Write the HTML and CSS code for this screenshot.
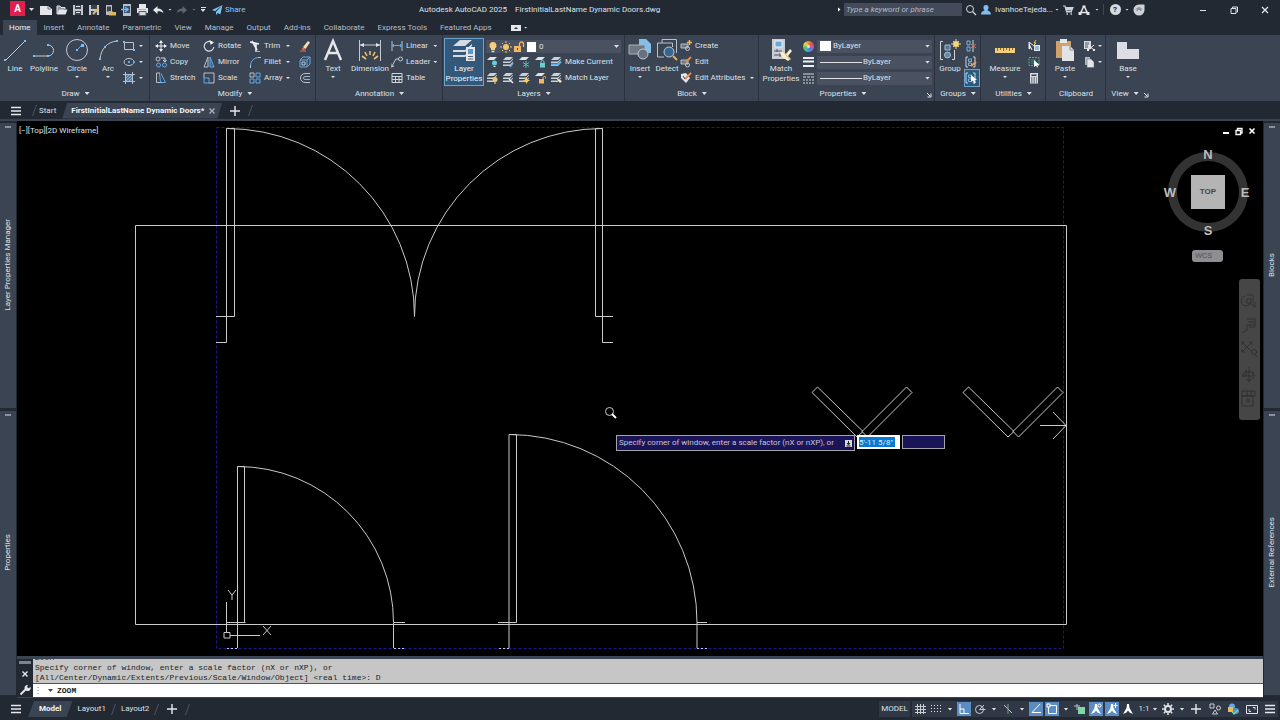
FILE: index.html
```html
<!DOCTYPE html>
<html lang="en">
<head>
<meta charset="utf-8">
<title>Autodesk AutoCAD 2025</title>
<link rel="stylesheet" href="styles.css">
</head>
<body>
<svg class="defs" aria-hidden="true">
  <symbol id="layers" viewBox="0 0 12 12"><path d="M4 1h7L8 4H1zM1 5.500h7l3-3v1L8 7H1zM1 8.500h7l3-3v1L8 10H1z" fill="#ccd1d8"/></symbol>
  <symbol id="page" viewBox="0 0 12 12"><path d="M0 2h8l4 3v6H0z" fill="#e4e6ea"/><path d="M8 2v3h3" stroke="#6d7580"/></symbol>
  <symbol id="menu" viewBox="0 0 12 12"><path d="M1 2.500h10M1 6h10M1 9.500h10" stroke="#e6e9ee" stroke-width="1.300"/></symbol>
  <symbol id="plus" viewBox="0 0 12 12"><path d="M6 1v10M1 6h10" stroke="#e6e9ee" stroke-width="1.400"/></symbol>
  <symbol id="cross" viewBox="0 0 12 12"><path d="M3 3l6 6M9 3l-6 6" stroke="#e6e9ee" stroke-width="1.200"/></symbol>
  <symbol id="person" viewBox="0 0 12 12"><path d="M6 1a2.500 2.500 0 0 1 2.500 2.700c0 1.200-.6 2.100-1.200 2.500C9.500 7 11 8 11 10.500H1C1 8 2.500 7 4.700 6.200 4 5.800 3.500 4.900 3.500 3.700A2.500 2.500 0 0 1 6 1z" fill="#82bdf0"/></symbol>
  <symbol id="figure" viewBox="0 0 12 12"><path d="M5 1h2l.5 4L11 11 7.500 9.500 6 7.500 4.500 9.500 1 11l3.500-6z" fill="#fff"/></symbol>
  <symbol id="bracket" viewBox="0 0 12 12"><path d="M3 1H1v10h2M8 1h2v10H8" stroke="#cfd4db"/><path d="M3.500 3h3v2.500h-3zM3.500 7h3v2.500h-3z" stroke="#77b3e3"/></symbol>
</svg>

<header class="titlebar">
  <div class="quick">
    <button class="logo" aria-label="Application menu">A</button>
    <button class="cell w13" aria-label="Menu options"><i class="dd"></i></button>
    <button class="cell" aria-label="New"><svg class="ico"><use href="#page"/></svg></button>
    <button class="cell" aria-label="Open"><svg class="ico"><path d="M1 10V2h3l1 1.500h4V5" stroke="#e4e6ea" fill="#8c939d"/><path d="M3 5.500h8.500L9.500 10.500H1z" fill="#e4e6ea"/></svg></button>
    <button class="cell" aria-label="Save"><svg class="ico"><path d="M1 1h10v10H1z" fill="#c3c8cf"/><path d="M3 1h6v4H3zM3 7h6v4H3z" fill="#38414e"/><path d="M4 2.500h4M4 8.500h4" stroke="#e4e6ea"/></svg></button>
    <button class="cell" aria-label="Save as"><svg class="ico"><path d="M1 1h10v10H1z" fill="#c3c8cf"/><path d="M3 1h6v4H3zM3 7h6v4H3z" fill="#38414e"/><path d="M5 10l5.500-5.500" stroke="#f0b84c" stroke-width="2"/></svg></button>
    <button class="cell" aria-label="Open from mobile"><svg class="ico"><path d="M2 1h6v10H2z" fill="#b9bec6"/><path d="M3 2.500h4v5H3z" fill="#3a424f"/><path d="M5 7h3l1 1h3v3.500H5z" fill="#e5b35c"/></svg></button>
    <button class="cell" aria-label="Save to mobile"><svg class="ico"><path d="M3 0h8v12H3z" fill="#b9bec6"/><path d="M4 2h6v7H4z" fill="#34506e"/><path d="M1 5.500h6M5 3l3 2.500L5 8" stroke="#70b7f2" stroke-width="1.500"/></svg></button>
    <button class="cell" aria-label="Plot"><svg class="ico"><path d="M3 0h7v4H3zM1 4h11v5H1z" fill="#e4e6ea"/><path d="M3 7.500h7v4H3z" fill="#d7dade" stroke="#525b68"/><path d="M2 5.500h8" stroke="#86bdea"/></svg></button>
    <button class="cell" aria-label="Undo"><svg class="ico"><path d="M1 6l4.500-4v2.500C9 4.500 11 6 11.500 9.500 10 7.500 8 7.200 5.500 7.300V10z" fill="#e4e6ea"/></svg></button>
    <button class="cell w8" aria-label="Undo list"><i class="dd sm"></i></button>
    <button class="cell" aria-label="Redo"><svg class="ico"><path d="M11 6L6.500 2v2.500C3 4.500 1 6 .5 9.500 2 7.500 4 7.200 6.500 7.300V10z" fill="#5b6471"/></svg></button>
    <button class="cell w8" aria-label="Redo list"><i class="dd sm dim"></i></button>
    <button class="cell w10 customize" aria-label="Customize toolbar"><i class="dd"></i></button>
    <button class="share"><svg class="ico"><path d="M11.500 1L1 6l3 1.200zM11.500 1L5 8v3l1.800-2 2.500 1.500z" fill="#7cc4f5"/></svg>Share</button>
  </div>
  <h1 class="title"><span>Autodesk AutoCAD 2025</span><span>FirstInitialLastName Dynamic Doors.dwg</span></h1>
  <div class="account">
    <button class="cell w10" aria-label="Collapse search"><i class="tri-right"></i></button>
    <input class="search" type="text" placeholder="Type a keyword or phrase" aria-label="Search">
    <button class="cell w18" aria-label="Search"><svg class="ico"><circle cx="5" cy="5" r="3.500" stroke="#d4d8de"/><path d="M7.500 7.500L11 11" stroke="#d4d8de" stroke-width="1.300"/></svg></button>
    <button class="user"><svg class="ico"><use href="#person"/></svg>IvanhoeTejeda...</button>
    <button class="cell w8" aria-label="Account options"><i class="dd sm"></i></button>
    <button class="cell w14" aria-label="App Store"><svg class="ico"><path d="M1 2h2l1.500 6H10M3.500 3.500H11L9.500 7H4" stroke="#cdd2d8" stroke-width="1.200"/><path d="M4 5h6" stroke="#cdd2d8" stroke-width="2"/><path d="M4.500 10h1.500M8.500 10h1.500" stroke="#cdd2d8" stroke-width="1.500"/></svg></button>
    <button class="cell w18" aria-label="Autodesk"><svg class="ico"><path d="M6 2l4 8M6 2L2 10M2 8.500h8" stroke="#e4e6ea" stroke-width="1.500"/><path d="M4.500 1.500h3v2h-3zM.5 8h3v3h-3zM8.500 8h3v3h-3z" fill="#e4e6ea"/></svg></button>
    <button class="cell w8" aria-label="Autodesk options"><i class="dd sm"></i></button>
    <span class="vsep"></span>
    <button class="cell" aria-label="Help"><span class="help">?</span></button>
    <button class="cell w8" aria-label="Help options"><i class="dd sm"></i></button>
    <button class="cell" aria-label="Assistant"><svg class="ico"><path d="M6 .5h5.500V6A5.500 5.500 0 1 1 6 .5z" fill="#cfd3d9"/><path d="M4 7a2 2 0 0 1 4 0M3 5.500a3.500 3.500 0 0 1 6 0" stroke="#6f7782"/></svg></button>
    <div class="winbtns">
      <button aria-label="Minimize"><svg class="ico"><path d="M3 6.500h6" stroke="#dfe2e7"/></svg></button>
      <button aria-label="Restore"><svg class="ico"><path d="M3 4.500h5v5H3zM4.500 4V3h5v5H8.500" stroke="#dfe2e7"/></svg></button>
      <button aria-label="Close"><svg class="ico"><use href="#cross"/></svg></button>
    </div>
  </div>
</header>

<nav class="tabs">
  <button class="on">Home</button><button>Insert</button><button>Annotate</button><button>Parametric</button><button>View</button><button>Manage</button><button>Output</button><button>Add-ins</button><button>Collaborate</button><button>Express Tools</button><button>Featured Apps</button>
  <button class="mini" aria-label="Minimize ribbon"><svg width="10" height="6"><path d="M0 0h10v6H0z" fill="#e4e6ea"/><path d="M3 4l2-2 2 2z" fill="#222933"/></svg><i class="dd sm"></i></button>
</nav>

<section class="ribbon">
  <div class="panel draw">
    <div class="body">
      <button class="big"><svg class="pic"><path d="M3 22L22 3" stroke="#c3c9d2"/><path d="M1 21h2v2H1zM21 2h2v2h-2z" fill="#7dbdf2"/></svg>Line</button>
      <button class="big"><svg class="pic"><path d="M2 18h14a5 5 0 0 0 0-11" stroke="#c3c9d2"/><path d="M1 17h2v2H1zM15 17h2v2h-2zM15 6h2v2h-2z" fill="#7dbdf2"/></svg>Polyline</button>
      <button class="big"><svg class="pic"><circle cx="12" cy="12" r="10.500" stroke="#c3c9d2"/><path d="M12 12l5-5" stroke="#5fa9ea"/><path d="M11 11h2v2h-2zM16 6h3v3h-3z" fill="#7dbdf2"/></svg>Circle<i class="dd sm"></i></button>
      <button class="big"><svg class="pic"><path d="M4 21C5 11 11 4 21 3" stroke="#c3c9d2"/><path d="M3 20h2v2H3zM8 8h2v2H8zM20 2h2v2h-2z" fill="#7dbdf2"/></svg>Arc<i class="dd sm"></i></button>
      <div class="rows">
        <button aria-label="Rectangle"><svg class="ico"><path d="M1.500 2.500h9v7h-9z" stroke="#b9c0ca"/><path d="M0 1h2v2H0zM10 9h2v2h-2z" fill="#7dbdf2"/></svg><i class="dd sm"></i></button>
        <button aria-label="Ellipse"><svg class="ico"><ellipse cx="6" cy="6" rx="5" ry="3.500" stroke="#b9c0ca"/><path d="M5 5h2v2H5zM10 5h2v2h-2z" fill="#5fa9ea"/></svg><i class="dd sm"></i></button>
        <button aria-label="Hatch"><svg class="ico"><path d="M3 3h6v6H3z" fill="#52789c"/><path d="M2.500 0v12M9.500 0v12M0 2.500h12M0 9.500h12" stroke="#b9c0ca"/><path d="M3 6l3-3M3 9l6-6M6 9l3-3" stroke="#7db4e0"/></svg><i class="dd sm"></i></button>
      </div>
    </div>
    <button class="name">Draw <i class="dd"></i></button>
  </div>

  <div class="panel modify">
    <div class="body">
      <div class="rows">
        <button><svg class="ico"><path d="M6 1v10M1 6h10" stroke="#eef0f3"/><path d="M6 0l2 3H4zM6 12l2-3H4zM0 6l3-2v4zM12 6L9 4v4z" fill="#eef0f3"/></svg>Move</button>
        <button><svg class="ico"><circle cx="3" cy="3" r="2" stroke="#b9c0ca"/><circle cx="3.500" cy="9" r="2" stroke="#5fa9ea"/><circle cx="9.500" cy="9" r="2" stroke="#5fa9ea"/><path d="M6 2h4v3M8 4l2 2 1.500-2" stroke="#d7dbe1"/></svg>Copy</button>
        <button><svg class="ico"><path d="M5 1H1.500v9.500H7" stroke="#b9c0ca"/><path d="M4.500 1l1 9.500M6 1.500l4.500 9H7" stroke="#5fa9ea"/></svg>Stretch</button>
      </div>
      <div class="rows">
        <button><svg class="ico"><path d="M9 2.500A4.800 4.800 0 1 0 10.800 7" stroke="#d7dbe1" stroke-width="1.200"/><path d="M6.500 0L11 2.500 7.500 5z" fill="#eef0f3"/></svg>Rotate</button>
        <button><svg class="ico"><path d="M5 1v10H1z" stroke="#b9c0ca"/><path d="M7 1v10h4z" stroke="#5fa9ea" fill="#37658f"/></svg>Mirror</button>
        <button><svg class="ico"><path d="M1 6V1h10v10H6" stroke="#b9c0ca"/><path d="M1 6h5v5H1z" stroke="#5fa9ea"/></svg>Scale</button>
      </div>
      <div class="rows">
        <button><svg class="ico"><path d="M1 2l9 2M3 1l5 9M7 4v7" stroke="#eef0f3" stroke-width="1.600"/><path d="M6 11.500h5" stroke="#8bbce5"/></svg>Trim<i class="dd sm"></i></button>
        <button><svg class="ico"><path d="M9 1.500h3M1.500 12V9" stroke="#b9c0ca"/><path d="M1.500 9A8 8 0 0 1 9 1.500" stroke="#5fa9ea"/></svg>Fillet<i class="dd sm"></i></button>
        <button><svg class="ico"><path d="M1 1h4v4H1z" stroke="#b9c0ca"/><path d="M7 1h4v4H7zM1 7h4v4H1zM7 7h4v4H7z" stroke="#5fa9ea"/></svg>Array<i class="dd sm"></i></button>
      </div>
      <div class="rows">
        <button aria-label="Erase"><svg class="ico"><path d="M4 7l5-6 2 1.500L6.500 9z" fill="#f3dfa9"/><path d="M4 7l2.500 2L5 10.500 2.500 9z" fill="#e0705a"/><path d="M1 11h6" stroke="#e0705a"/></svg></button>
        <button aria-label="Explode"><svg class="ico"><path d="M1 4h7v7H1zM1 4l3-3h7v7l-3 3M8 4l3-3" stroke="#5fa9ea"/><path d="M3 6h3v3H3z" stroke="#c3c9d2"/></svg></button>
        <button aria-label="Offset"><svg class="ico"><path d="M11 1.500H6a4.500 4.500 0 0 0 0 9h5" stroke="#b9c0ca"/><path d="M11 4.500H6a1.500 1.500 0 0 0 0 3h5" stroke="#9fb0c6"/></svg></button>
      </div>
    </div>
    <button class="name">Modify <i class="dd"></i></button>
  </div>

  <div class="panel annot">
    <div class="body">
      <button class="big"><svg class="pic"><path d="M4 22L12 3l8 19M7 15h10" stroke="#e4e6ea" stroke-width="2.500"/></svg>Text<i class="dd sm"></i></button>
      <button class="big"><svg class="pic"><path d="M1.500 2v21M22.500 2v21M2 7h20" stroke="#c3c9d2"/><path d="M2 7l4-2v4zM22 7l-4-2v4z" fill="#e4e6ea"/><path d="M12 13v4M7 14l2 4M17 14l-2 4M4 18l4 3M20 18l-4 3" stroke="#f2bd63" stroke-width="1.600"/></svg>Dimension</button>
      <div class="rows">
        <button><svg class="ico"><path d="M1 1v10M11 1v10" stroke="#b9c0ca"/><path d="M1 5.500h10M3 4L1 5.500 3 7M9 4l2 1.500L9 7" stroke="#5fa9ea"/></svg>Linear<i class="dd sm"></i></button>
        <button><svg class="ico"><path d="M1 10l4-7h3M0 7.500v3.500l3-1" stroke="#c3c9d2"/><circle cx="9.500" cy="3" r="2" stroke="#c3c9d2"/></svg>Leader<i class="dd sm"></i></button>
        <button><svg class="ico"><path d="M1 1.500h10v9H1zM1 4.500h10M1 7.500h10M4.500 4v6.500M8 4v6.500" stroke="#d0d5dc"/></svg>Table</button>
      </div>
    </div>
    <button class="name">Annotation <i class="dd"></i></button>
  </div>

  <div class="panel layer">
    <div class="body">
      <button class="big pressed"><svg class="pic"><path d="M8 2h12l-7 6H1zM1 14h12l7-6v-2l-7 6H1zM1 19h12l7-6v-2l-7 6H1z" fill="#d7dbe1"/><path d="M14 9h9v14h-9z" fill="#e4e6ea"/><path d="M16 11h5v5h-5z" fill="#559bd0"/><path d="M16 18.500h5M16 21h5" stroke="#56606d"/></svg>Layer<br>Properties</button>
      <div class="layergrid">
        <div class="combo">
          <svg class="ico"><path d="M6 1a3.500 3.500 0 0 1 2 6.400V9H4V7.400A3.500 3.500 0 0 1 6 1z" fill="#f7cf78"/><path d="M4.500 10.500h3" stroke="#d7dbe1" stroke-width="1.500"/></svg>
          <svg class="ico"><circle cx="6" cy="6" r="3" fill="#f2c868"/><path d="M6 0v2M6 10v2M0 6h2M10 6h2M2 2l1 1M9 9l1 1M10 2L9 3M3 9l-1 1" stroke="#f2c868"/></svg>
          <svg class="ico"><path d="M1 5h7v6H1z" fill="#f0b765"/><path d="M6.500 5V3a2 2 0 0 1 4 0v3" stroke="#f0b765" stroke-width="1.300"/><path d="M4 7h1v2H4z" fill="#3b4453"/></svg>
          <span class="swatch"></span>
          <select aria-label="Layer"><option>0</option></select><i class="dd"></i>
        </div>
        <div class="line">
          <button aria-label="Layer off"><svg class="ico"><path d="M4 1h7L8 4H1z" fill="#dfe3e8"/><circle cx="8.500" cy="7" r="2.500" fill="#5fd0d8"/><path d="M7.500 10.500h2" stroke="#e4e6ea"/></svg></button>
          <button aria-label="Isolate layer"><svg class="ico"><use href="#layers"/><path d="M8 11l3-4" stroke="#7db4e0" stroke-width="1.500"/></svg></button>
          <button aria-label="Freeze layer"><svg class="ico"><path d="M4 1h7L8 4H1z" fill="#dfe3e8"/><path d="M8 5v7M5 6.500l6 4M11 6.500l-6 4" stroke="#55c2b0"/></svg></button>
          <button aria-label="Lock layer"><svg class="ico"><path d="M4 1h7L8 4H1z" fill="#dfe3e8"/><path d="M6 7h5v4.500H6z" fill="#6ad0cf"/><path d="M7 7V6a1.500 1.500 0 0 1 3 0v1" stroke="#6ad0cf"/></svg></button>
          <button class="grow"><svg class="ico"><use href="#layers"/><path d="M1 8.500h7l3-3" stroke="#5cb2e8" stroke-width="1.800"/></svg>Make Current</button>
        </div>
        <div class="line">
          <button aria-label="All layers on"><svg class="ico"><use href="#layers"/><circle cx="9" cy="7.500" r="2.500" fill="#f2c868"/><path d="M8 11h2" stroke="#e4e6ea"/></svg></button>
          <button aria-label="Unisolate layer"><svg class="ico"><use href="#layers"/><path d="M7 7l4 4" stroke="#eef0f3" stroke-width="1.500"/></svg></button>
          <button aria-label="Thaw layers"><svg class="ico"><use href="#layers"/><circle cx="8.500" cy="8.500" r="2" fill="#f2c868"/><path d="M8.500 5.500v6M5.500 8.500h6" stroke="#f2c868"/></svg></button>
          <button aria-label="Unlock layer"><svg class="ico"><path d="M4 1h7L8 4H1z" fill="#dfe3e8"/><path d="M5 7h5v4.500H5z" fill="#f0b765"/><path d="M9 7V6a1.500 1.500 0 0 1 3 0v1" stroke="#f0b765"/></svg></button>
          <button class="grow"><svg class="ico"><use href="#layers"/><path d="M6 6l4 5 2-2z" fill="#f7edcf"/></svg>Match Layer</button>
        </div>
      </div>
    </div>
    <button class="name">Layers <i class="dd"></i></button>
  </div>

  <div class="panel block">
    <div class="body">
      <button class="big"><svg class="pic"><path d="M11 1h7l5 5v9H11z" fill="#83bfe9"/><path d="M1 7h16v9H1z" fill="#6e7784" stroke="#aab1bb"/><circle cx="15" cy="16" r="5" fill="#68717e" stroke="#c3c9d2"/></svg>Insert<i class="dd sm"></i></button>
      <button class="big"><svg class="pic"><path d="M7 5V1.500h14.500V15M2.500 5h15v4M2.500 5v14H9" stroke="#b9c0ca"/><circle cx="14" cy="14" r="5" fill="#37658f" stroke="#c3c9d2"/><path d="M18 18l4 4" stroke="#dbb36b" stroke-width="2"/></svg>Detect</button>
      <div class="rows">
        <button><svg class="ico"><path d="M1 4h7v4H1z" fill="#6e7784" stroke="#b9c0ca"/><circle cx="7.500" cy="8.500" r="2" stroke="#c3c9d2"/><path d="M9.500 0v5M7 2.500h5" stroke="#f0b765" stroke-width="1.500"/></svg>Create</button>
        <button><svg class="ico"><path d="M1 4h7v4H1z" fill="#6e7784" stroke="#b9c0ca"/><circle cx="7.500" cy="9" r="2" stroke="#c3c9d2"/><path d="M6 6l5-5" stroke="#e58b54" stroke-width="1.800"/></svg>Edit</button>
        <button><svg class="ico"><path d="M1 2l5-1 4 5-4 5-5-5z" fill="#e4e6ea"/><path d="M5 7l6-6" stroke="#e58b54" stroke-width="1.800"/><path d="M3 4l2 3" stroke="#3b4453"/></svg>Edit Attributes<i class="dd sm"></i></button>
      </div>
    </div>
    <button class="name">Block <i class="dd"></i></button>
  </div>

  <div class="panel props">
    <div class="body">
      <button class="big"><svg class="pic"><path d="M3 1h13v20H3z" fill="#c9ced5"/><path d="M6 3h7v6H6z" fill="#62a9dc" stroke="#eef0f3"/><path d="M5 13h8M5 17h8M8 11v3M11 15v4" stroke="#4d5764"/><path d="M11 15l3-2 3 3 4-5 2 2-4 5 3 3-3 2-6-4z" fill="#f7edcf"/><path d="M14 13l7 9" stroke="#e5b35c"/></svg>Match<br>Properties</button>
      <div class="proplist">
        <div class="line"><span class="wheel"></span><div class="combo"><span class="swatch"></span><select aria-label="Color"><option>ByLayer</option></select><i class="dd"></i></div></div>
        <div class="line"><svg class="ico"><path d="M0 2h11M0 5.500h11M0 10h11" stroke="#eef0f3" stroke-width="2"/></svg><div class="combo"><span class="rule"></span><select aria-label="Lineweight"><option>ByLayer</option></select><i class="dd"></i></div></div>
        <div class="line"><svg class="ico"><path d="M0 2h11" stroke="#d0d5dc"/><path d="M0 5h11" stroke="#d0d5dc" stroke-dasharray="3 1"/><path d="M0 8h11M0 11h11" stroke="#d0d5dc" stroke-dasharray="2 1"/></svg><div class="combo"><span class="rule"></span><select aria-label="Linetype"><option>ByLayer</option></select><i class="dd"></i></div></div>
      </div>
    </div>
    <div class="foot"><button class="name">Properties <i class="dd"></i></button><button class="launch" aria-label="Properties palette"><svg width="6" height="6"><path d="M1 1l3 3M5 1.500V5H1.500" stroke="#e4e6ea"/></svg></button></div>
  </div>

  <div class="panel groups">
    <div class="body">
      <button class="big"><svg class="pic"><path d="M5 3.500H2.500v18H5M14 21.500h2.500V12" stroke="#d0d5dc"/><path d="M7 7h5v5H7z" fill="#5a7088" stroke="#9cc3e2"/><circle cx="9.500" cy="17" r="3" fill="#6c8699" stroke="#9cc3e2"/><circle cx="18" cy="6" r="3" fill="#f5d27c"/><path d="M18 1v10M13 6h10M15 3l6 6M21 3l-6 6" stroke="#f5d27c"/></svg>Group</button>
      <div class="rows">
        <button aria-label="Ungroup"><svg class="ico"><path d="M2 1h3v4H2zM2 7h3v4H2z" stroke="#77b3e3"/><path d="M8 0v12" stroke="#cfd4db"/><path d="M6 4l5 4M11 4L6 8" stroke="#e0705a"/></svg></button>
        <button aria-label="Group edit"><svg class="ico"><use href="#bracket"/><path d="M6 10l5-4" stroke="#e8a05c" stroke-width="2"/></svg></button>
        <button class="tog" aria-label="Group selection"><svg class="ico"><use href="#bracket"/><path d="M6 3v7l2-1.500 1 3 1.500-.5-1-3H12z" fill="#fff"/></svg></button>
      </div>
    </div>
    <button class="name">Groups <i class="dd"></i></button>
  </div>

  <div class="panel utils">
    <div class="body">
      <button class="big"><svg class="pic"><path d="M2 10h20v5H2z" fill="#f3cf7e"/><path d="M4.500 10v3M7.500 10v2M10.500 10v3M13.500 10v2M16.500 10v3M19.500 10v2" stroke="#8b6a2c"/></svg>Measure<i class="dd sm"></i></button>
      <div class="rows">
        <button aria-label="Quick select"><svg class="ico"><path d="M1 2v7l2-1.500 1 2.500M1 2l5 4" fill="#fff" stroke="#e4e6ea"/><path d="M6 5h6v6H6z" fill="#e4e6ea"/><path d="M7 7h4M7 9h4" stroke="#4c90c8"/><path d="M8 0L6 3h2L6 5" stroke="#f2c868"/></svg></button>
        <button aria-label="Select all"><svg class="ico"><path d="M1 1.500h10v8H1z" stroke="#52b585" stroke-dasharray="2 1"/><path d="M3 3h5v5H3z" fill="#24745a"/><path d="M6 4v7l2-1.500 1 2 1-.5-1-2h2.500z" fill="#fff"/></svg></button>
        <button aria-label="Calculator"><svg class="ico"><path d="M2 1h8v10.500H2z" fill="#d7dbe1"/><path d="M3.500 2.500h5v1.500h-5z" fill="#3b4453"/><path d="M3 6h6M3 8h6M3 10h6" stroke="#3b4453" stroke-dasharray="1.500 1"/></svg></button>
      </div>
    </div>
    <button class="name">Utilities <i class="dd"></i></button>
  </div>

  <div class="panel clip">
    <div class="body">
      <button class="big"><svg class="pic"><path d="M3 3h15v17H3z" fill="#cfa36a"/><path d="M7 1h7v4H7z" fill="#e4e6ea"/><path d="M9 8h8l4 4v11H9z" fill="#e1e3e7"/><path d="M17 8v4h4" stroke="#89909b"/></svg>Paste<i class="dd sm"></i></button>
      <div class="rows">
        <button aria-label="Cut"><svg class="ico"><path d="M1 1h7v8H1z" fill="#d7dbe1"/><path d="M2 3h4M2 5h4M2 7h3" stroke="#4d5764"/><path d="M5 5l6 5M11 5l-6 5" stroke="#eef0f3"/><path d="M10 9h2v2h-2zM4 9h2v2H4z" fill="#eef0f3"/></svg><i class="dd sm"></i></button>
        <button aria-label="Copy to clipboard"><svg class="ico"><path d="M2 1h5v8H2z" fill="#b4bac3"/><path d="M4 3h4l3 3v5.500H4z" fill="#e4e6ea" stroke="#59626f" stroke-width=".5"/></svg><i class="dd sm"></i></button>
      </div>
    </div>
    <button class="name">Clipboard</button>
  </div>

  <div class="panel view">
    <div class="body">
      <button class="big"><svg class="pic"><path d="M1 4h10v7h12v10H1z" fill="#dcdee3"/></svg>Base<i class="dd sm"></i></button>
    </div>
    <div class="foot"><button class="name">View <i class="dd"></i></button><button class="launch" aria-label="View dialog"><svg width="6" height="6"><path d="M1 1l3 3M5 1.500V5H1.500" stroke="#e4e6ea"/></svg></button></div>
  </div>
</section>

<nav class="files">
  <button class="cell w32" aria-label="File menu"><svg class="ico"><use href="#menu"/></svg></button>
  <span class="slash"></span>
  <button class="start">Start</button>
  <div class="filetab"><button class="fname">FirstInitialLastName Dynamic Doors*</button><button class="close" aria-label="Close tab"><svg class="ico"><path d="M3.500 3.500l5 5M8.500 3.500l-5 5" stroke="#aab1bb" stroke-width="1.300"/></svg></button></div>
  <button class="cell w26" aria-label="New tab"><svg class="ico"><use href="#plus"/></svg></button>
  <span class="slash"></span>
</nav>

<main class="work">
  <aside class="side left">
    <button class="palette"><span>Layer Properties Manager</span></button>
    <button class="palette"><span>Properties</span></button>
  </aside>
  <div class="center">
    <div class="canvas">
      <svg class="drawing" aria-label="Door drawing">
        <g transform="translate(-17 -121)" stroke="#c9c9c9">
          <path d="M216.500 127.500H1063.500V648.500H216.500z" stroke="#1a1a90" stroke-dasharray="3 2"/>
          <path d="M136 225.500H1066.500V624.500H135.500V225.500z"/>
          <path d="M216 316.500H234.500V128.500H226.500V342.500H216M234.500 128.500"/>
          <path d="M226.500 128.500A188 188 0 0 1 414.500 316.500A188 188 0 0 1 602.500 128.500"/>
          <path d="M613 316.500H595.500V128.500H602.500V342.500H613"/>
          <path d="M226.500 622.500H245.500M237.500 648V466.500H244.500V622.500M237.500 466.500A156 156 0 0 1 393.500 622.500V648M394 622.500H405"/>
          <path d="M227 648.500H237M394 648.500H405M499 648.500H509M697 648.500H707" stroke-dasharray="2 2"/>
          <path d="M498 622.500H516.500V434.500H509V648M509 434.500A188 188 0 0 1 697 622.500V648M697 622.500H707"/>
          <path id="bifold" d="M968.500 387L963 392.500 1008 437 1014 431.500zM1057.500 387L1063 392.500 1018.500 437 1013 431.500z"/>
          <use href="#bifold" x="-151"/>
          <path d="M1040 425.500H1066M1053 412L1066 425.500 1053 439"/>
          <circle cx="609.500" cy="411.500" r="4"/><path d="M612 414l4 4" stroke="#fff" stroke-width="2"/>
          <path d="M226.500 602V632M224 632.500H230V638H224zM230 635.500H260"/>
          <path d="M228 590L232 595 236 590M232 595V600M263 626L271 635M271 626L263 635"/>
        </g>
      </svg>
      <button class="viewlabel">[−][Top][2D Wireframe]</button>
      <div class="docbtns">
        <button aria-label="Minimize drawing"><svg class="ico"><path d="M3 8h6" stroke="#fff" stroke-width="2"/></svg></button>
        <button aria-label="Restore drawing"><svg class="ico"><path d="M3 5.500h4.500v4H3zM4.500 5V3.500H9V8H8" stroke="#fff" stroke-width="1.300"/></svg></button>
        <button aria-label="Close drawing"><svg class="ico"><path d="M3.500 3.500l5 5M8.500 3.500l-5 5" stroke="#fff" stroke-width="1.600"/></svg></button>
      </div>
      <div class="cube">
        <span class="n">N</span><span class="w">W</span><button>TOP</button><span class="e">E</span><span class="s">S</span>
      </div>
      <button class="wcs">WCS</button>
      <div class="navbar">
        <button aria-label="Full navigation wheel"><svg class="tool"><path d="M6 5a5 5 0 1 0 5 8M8 4h6v8M8 8h4v4H8zM11 12l5 4v-5"/></svg></button>
        <button aria-label="Pan"><svg class="tool"><path d="M3 18l5-3V9M8 4h8v8H10M9 7h6M9 10h6"/></svg></button>
        <button aria-label="Zoom extents"><svg class="tool"><path d="M3 3l10 10M13 3L3 13M3 6V3h3M10 3h3v3M3 10v3h3"/><circle cx="15" cy="13" r="2.500"/><path d="M16 15l2 3"/></svg></button>
        <button aria-label="Orbit"><svg class="tool"><path d="M10 3v14M3 12l4-6v6zM7 8h7v4H3M13 8l3 4-3 3M8 15l2 3 2-3"/></svg></button>
        <button aria-label="ShowMotion"><svg class="tool"><path d="M3 3h13v5H3zM8 3v5M12 3v5M3 8h11v10H3z"/><path d="M8 11h2v3H8z"/></svg></button>
      </div>
      <div class="prompt">
        <label for="dist">Specify corner of window, enter a scale factor (nX or nXP), or <svg width="7" height="7"><path d="M0 0h7v7H0z" fill="#d8d8dc"/><path d="M3.500 1v3M2 3l1.500 2L5 3M1.500 6h4" stroke="#222"/></svg></label>
        <input id="dist" class="dist" type="text" value="5'-11 5/8&quot;">
        <input class="angle" type="text" aria-label="Second value">
      </div>
    </div>
    <section class="command">
      <div class="cmdtools">
        <i class="grip"></i>
        <button aria-label="Close command line"><svg class="ico"><path d="M3.500 3.500l5 5M8.500 3.500l-5 5" stroke="#e4e6ea" stroke-width="1.400"/></svg></button>
        <button aria-label="Customize"><svg class="ico"><path d="M1.500 10.500L7 5" stroke="#e4e6ea" stroke-width="2"/><path d="M6 5.500A3 3 0 0 1 9 1L8 3l1.500 1.300L11.500 3A3 3 0 0 1 7 6.500z" fill="#e4e6ea"/></svg></button>
      </div>
      <div class="cmdmain">
        <div class="history"><div>ZOOM</div><div>Specify corner of window, enter a scale factor (nX or nXP), or</div><div>[All/Center/Dynamic/Extents/Previous/Scale/Window/Object] &lt;real time&gt;: D</div></div>
        <div class="entry"><i class="dots"></i><i class="dd"></i><input type="text" value="ZOOM" aria-label="Command"></div>
      </div>
    </section>
  </div>
  <aside class="side right">
    <button class="palette"><span>Blocks</span></button>
    <button class="palette"><span>External References</span></button>
  </aside>
</main>

<footer class="status">
  <button class="cell w32" aria-label="Layout menu"><svg class="ico"><use href="#menu"/></svg></button>
  <button class="modeltab">Model</button>
  <button class="lay">Layout1</button><span class="slash"></span>
  <button class="lay">Layout2</button><span class="slash"></span>
  <button class="cell w26" aria-label="New layout"><svg class="ico"><use href="#plus"/></svg></button><span class="slash"></span>
  <div class="tray">
    <button class="model">MODEL</button>
    <button aria-label="Grid"><svg class="ico"><path d="M3.500 1v10M6.500 1v10M9.500 1v10M1 3.500h11M1 6.500h11M1 9.500h11" stroke="#c9ced5"/></svg></button>
    <button aria-label="Snap"><svg class="ico"><path d="M1 2.500h10M1 5.500h10M1 8.500h10" stroke="#dfe2e7" stroke-dasharray="1 2"/></svg></button>
    <button class="a" aria-label="Snap options"><i class="dd"></i></button>
    <button class="act" aria-label="Ortho"><svg class="ico"><path d="M2 1v9.500h9M2 6h4v4" stroke="#fff"/></svg></button>
    <button aria-label="Polar"><svg class="ico"><circle cx="5.500" cy="6.500" r="4" stroke="#c9ced5"/><path d="M5.500 6.500h6M5.500 6.500L10 2" stroke="#c9ced5"/></svg></button>
    <button class="a" aria-label="Polar options"><i class="dd"></i></button>
    <button aria-label="Isodraft"><svg class="ico"><path d="M2 2l8 8" stroke="#c9ced5"/><path d="M6 1v10" stroke="#7e9c8d"/></svg></button>
    <button class="a" aria-label="Isodraft options"><i class="dd"></i></button>
    <button class="act" aria-label="Object snap tracking"><svg class="ico"><path d="M10 1L2 9.500h9" stroke="#fff"/></svg></button>
    <button class="act" aria-label="Object snap"><svg class="ico"><path d="M2.500 2.500h8v8h-8z" stroke="#fff"/><path d="M1 1h3v3H1z" stroke="#fff" fill="#5b8cc3"/></svg></button>
    <button class="a" aria-label="Object snap options"><i class="dd"></i></button>
    <button aria-label="Selection cycling"><svg class="ico"><path d="M4 4h7v7H4z" fill="#80d6a4"/><path d="M3 1v6M0 3h6" stroke="#b6beca"/></svg></button>
    <button class="act" aria-label="Annotation visibility"><svg class="ico"><use href="#figure"/><circle cx="9.500" cy="2.500" r="1.500" stroke="#fff"/></svg></button>
    <button class="act" aria-label="Auto scale"><svg class="ico"><use href="#figure"/><path d="M9.500 0v5M7.500 2.500h4" stroke="#fff"/></svg></button>
    <button aria-label="Annotation scale"><svg class="ico"><use href="#figure"/></svg></button>
    <button class="scale">1:1<i class="dd"></i></button>
    <button aria-label="Workspace"><svg class="ico"><circle cx="6" cy="6" r="3" stroke="#dfe2e7" stroke-width="2"/><path d="M6 0v2M6 10v2M0 6h2M10 6h2M1.800 1.800l1.400 1.400M8.800 8.800l1.400 1.400M10.200 1.800L8.800 3.200M3.200 8.800l-1.400 1.400" stroke="#dfe2e7" stroke-width="1.500"/></svg></button>
    <button class="a" aria-label="Workspace options"><i class="dd"></i></button>
    <button aria-label="Annotation monitor"><svg class="ico"><use href="#plus"/></svg></button>
    <button class="wide" aria-label="Isolate objects"><svg class="ico"><path d="M1 1h4v4H1zM6 7l2.500 4h-5z" stroke="#c9ced5"/><circle cx="9.500" cy="5" r="2" stroke="#c9ced5"/></svg></button>
    <button aria-label="Graphics performance"><svg class="ico"><circle cx="5" cy="3.500" r="3" fill="#67a9dd"/><path d="M1 4h5v5H1z" fill="#edbb55"/><circle cx="9" cy="8" r="3" fill="#4f96ce"/><path d="M5 8.500l2 2.500 4-4" stroke="#7fd39c" stroke-width="1.300"/></svg></button>
    <button class="wide" aria-label="Clean screen"><svg class="ico"><path d="M.5 2.500h11v8H.5zM3 8V6M3 8.500h2M9 4.500v2M9 4.500H7" stroke="#dfe2e7"/></svg></button>
    <button aria-label="Customization"><svg class="ico"><use href="#menu"/></svg></button>
  </div>
</footer>
</body>
</html>
```
FILE: styles.css
```css
* { box-sizing: border-box; }
body {
  margin: 0;
  height: 100vh;
  display: flex;
  flex-direction: column;
  overflow: hidden;
  background: #222933;
  color: #dde1e6;
  font: 8px/10px Roboto, "Open Sans", sans-serif;
}
button, input, select {
  font: inherit;
  color: inherit;
  background: none;
  border: 0;
  border-radius: 0;
  margin: 0;
  padding: 0;
  outline: 0;
}
button { white-space: nowrap; }
svg { fill: none; flex: none; display: block; }
.defs { position: absolute; width: 0; height: 0; }
.ico { width: 12px; height: 12px; }
.pic { width: 24px; height: 24px; }

.dd {
  display: inline-block;
  flex: none;
  width: 5px;
  height: 3px;
  background: #dde1e6;
  clip-path: polygon(0 0, 100% 0, 50% 100%);
}
.dd.sm { width: 4px; height: 2px; }
.dd.dim { background: #6b7481; }
.tri-right {
  width: 3px;
  height: 5px;
  background: #fff;
  clip-path: polygon(0 0, 100% 50%, 0 100%);
}
.cell {
  flex: none;
  width: 16px;
  display: flex;
  align-items: center;
  justify-content: center;
}
.w8 { width: 8px; }
.w10 { width: 10px; }
.w13 { width: 13px; }
.w14 { width: 14px; }
.w18 { width: 18px; }
.w26 { width: 26px; }
.w32 { width: 32px; }

/* Title bar */
.titlebar { flex: none; display: flex; height: 20px; padding-bottom: 1px; }
.quick, .account { display: flex; flex: none; }
.quick { padding-left: 10px; }
.logo {
  width: 15px;
  height: 15px;
  margin-top: 1px;
  background: #e01f4f;
  color: #fff;
  font-size: 10px;
  font-weight: 700;
}
.customize { flex-direction: column; gap: 1px; }
.customize::before { content: ""; width: 5px; height: 1px; background: #dde1e6; }
.share { display: flex; align-items: center; gap: 2px; padding-left: 3px; color: #86c8f5; }
.title {
  flex: 1;
  display: flex;
  align-items: center;
  justify-content: center;
  gap: 8px;
  margin: 0;
  font: inherit;
  white-space: nowrap;
}
.search {
  width: 118px;
  height: 13px;
  margin-top: 3px;
  padding: 0 2px;
  background: #434a59;
  font-style: italic;
}
.search::placeholder { color: #b3b9c3; opacity: 1; }
.user { display: flex; align-items: center; gap: 3px; min-width: 73px; }
.vsep { width: 1px; height: 11px; margin: 4px 3px 0 2px; background: #3e4755; }
.help {
  width: 11px;
  height: 11px;
  border-radius: 50%;
  background: #d7dade;
  color: #222933;
  font-weight: 700;
  line-height: 11px;
}
.winbtns { display: flex; margin-left: 40px; }
.winbtns button { width: 31px; display: flex; align-items: center; justify-content: center; }

/* Ribbon tabs */
.tabs { flex: none; display: flex; height: 15px; padding-left: 3px; gap: 1px; }
.tabs button { padding: 0 6px; color: #b7bdc6; }
.tabs .on { background: #3b4453; color: #f2f4f6; }
.tabs .mini { display: flex; align-items: center; gap: 3px; margin-left: 6px; }

/* Ribbon */
.ribbon { flex: none; display: flex; height: 66px; background: #3b4453; }
.panel {
  flex: none;
  display: flex;
  flex-direction: column;
  padding: 3px 0 0 1px;
  border-right: 1px solid #2b323e;
}
.body { display: grid; height: 48px; }
.name {
  display: flex;
  align-items: center;
  justify-content: center;
  gap: 5px;
  height: 15px;
  flex: 1;
}
.foot { display: flex; height: 15px; }
.launch { padding: 2px 2px 0 0; }
.big {
  display: flex;
  flex-direction: column;
  align-items: center;
  height: 48px;
}
.big .pic { margin-bottom: 2px; }
.big .dd { margin-top: 2px; }
.pressed { background: #34587a; outline: 1px solid #6ba2cf; outline-offset: -1px; color: #f2f4f6; }
.rows { display: grid; grid-template-rows: repeat(3, 16px); }
.rows button, .line button { display: flex; align-items: center; gap: 3px; }
.rows .dd { margin-left: auto; }
.line { display: flex; align-items: center; height: 16px; }
.line button { width: 16px; flex: none; }
.line .grow { width: auto; }
.tog { background: #2b5a7c; outline: 1px solid #6ba2cf; }

.draw { width: 150px; padding-left: 2px; }
.draw .body { grid-template-columns: 26px 32px 34px 28px 21px; }
.draw .rows { padding-left: 1px; }
.modify { width: 166px; padding-left: 5px; }
.modify .body { grid-template-columns: 48px 46px 41px 16px; }
.modify .rows:last-child { margin-left: 9px; width: 16px; }
.annot { width: 127px; }
.annot .body { grid-template-columns: 32px 38px 45px; column-gap: 2px; }
.layer { width: 182px; }
.layer .body { grid-template-columns: 40px 1fr; column-gap: 2px; padding-right: 3px; }
.block { width: 134px; }
.block .body { grid-template-columns: 28px 24px 74px; column-gap: 1px; }
.props { width: 176px; }
.props .body { grid-template-columns: 42px 1fr; column-gap: 1px; padding-right: 2px; }
.groups { width: 46px; }
.groups .body { grid-template-columns: 28px 14px; column-gap: 1px; }
.utils { width: 65px; }
.utils .body { grid-template-columns: 46px 14px; }
.clip { width: 60px; }
.clip .body { grid-template-columns: 36px 18px; }
.view { width: 45px; border: 0; }
.view .body { grid-template-columns: 42px; }

.combo {
  flex: 1;
  min-width: 0;
  display: flex;
  align-items: center;
  height: 13px;
  padding-right: 2px;
  background: #4a5262;
}
.combo select { flex: 1; min-width: 0; appearance: none; }
.swatch { flex: none; width: 9px; height: 10px; background: #fff; }
.layergrid { display: grid; grid-template-rows: 16px 16px 16px; }
.layergrid .combo { margin-top: 2px; padding-left: 1px; gap: 1px; }
.layergrid .swatch { margin: 0 2px 0 1px; }
.proplist .line { gap: 3px; }
.proplist .line > svg { margin-right: -1px; }
.proplist .swatch { margin: 0 2px 0 3px; width: 11px; }
.wheel {
  width: 11px;
  height: 11px;
  border-radius: 50%;
  background: radial-gradient(circle, #ddd 0 1px, transparent 2px), conic-gradient(#f08a3c, #e8504a, #b95bc4, #4a7ee0, #43b9c9, #5fc45c, #e8d54a, #f08a3c);
}
.rule { width: 42px; height: 1px; margin: 0 1px 0 3px; background: #dde1e6; }

/* File tabs */
.files {
  flex: none;
  display: flex;
  align-items: center;
  height: 20px;
  padding-top: 1px;
  border-bottom: 2px solid #3b4453;
}
.slash { flex: none; width: 1px; height: 11px; margin: 0 2px; background: #4b5463; transform: skewX(-20deg); }
.start { padding: 0 6px 0 2px; }
.filetab {
  display: flex;
  align-items: center;
  height: 16px;
  padding: 0 4px 0 9px;
  background: #3b4453;
  clip-path: polygon(5px 0, 100% 0, calc(100% - 5px) 100%, 0 100%);
}
.fname { font-weight: 700; color: #f2f4f6; }
.close { margin-left: 2px; }

/* Workspace */
.work { flex: 1; min-height: 0; display: flex; }
.side {
  flex: none;
  width: 17px;
  display: flex;
  flex-direction: column;
  gap: 3px;
  padding: 2px 1px 3px 0;
}
.side.right { padding: 2px 0 3px 1px; }
.palette {
  flex: 1;
  display: flex;
  align-items: center;
  justify-content: center;
  background: #3b4453 linear-gradient(#8b929d, #8b929d) 5px 3px / 6px 2px no-repeat;
}
.palette span { writing-mode: vertical-rl; transform: rotate(180deg); }
.center { flex: 1; min-width: 0; display: flex; flex-direction: column; }
.canvas { flex: 1; min-height: 0; position: relative; overflow: hidden; background: #000; }
.drawing { position: absolute; inset: 0; width: 100%; height: 100%; }
.viewlabel { position: absolute; left: 2px; top: 5px; }
.docbtns { position: absolute; right: 5px; top: 4px; display: flex; gap: 1px; }

.cube {
  position: absolute;
  right: 15px;
  top: 31px;
  width: 80px;
  height: 80px;
  border: 9px solid #333;
  border-radius: 50%;
  color: #bcbcbc;
  font: 700 13px/14px "Liberation Sans", sans-serif;
}
.cube span { position: absolute; width: 14px; text-align: center; }
.cube .n { left: 24px; top: -13px; }
.cube .s { left: 24px; bottom: -15px; }
.cube .w { left: -14px; top: 25px; }
.cube .e { right: -13px; top: 25px; }
.cube button {
  position: absolute;
  inset: 14px;
  background: #b4b4b4;
  color: #444;
  font-size: 8px;
}
.wcs {
  position: absolute;
  right: 40px;
  top: 129px;
  width: 31px;
  height: 12px;
  padding-left: 3px;
  border-radius: 3px;
  background: #8e8e92;
  color: #55555c;
  text-align: left;
}
.navbar {
  position: absolute;
  right: 3px;
  top: 158px;
  width: 21px;
  height: 141px;
  display: flex;
  flex-direction: column;
  justify-content: space-evenly;
  padding: 8px 0;
  border-radius: 3px;
  background: #464646;
}
.tool { width: 20px; height: 20px; stroke: #303030; }
.prompt { position: absolute; left: 599px; top: 314px; display: flex; gap: 2px; color: #c8c4d8; }
.prompt label {
  display: flex;
  align-items: center;
  width: 239px;
  height: 16px;
  padding: 0 2px;
  justify-content: space-between;
  border: 1px solid #a2a2a8;
  background: #1a1458;
  white-space: nowrap;
}
.dist {
  width: 43px;
  height: 14px;
  border: 2px solid #fff;
  border-right-width: 5px;
  background: #0b79d0;
  color: #d8f0ff;
}
.angle { width: 43px; height: 14px; border: 1px solid #a2a2a8; background: #1a1458; }

/* Command line */
.command { flex: none; display: flex; border-top: 3px solid #3b4453; border-bottom: 1px solid #3b4453; }
.cmdtools { width: 16px; display: flex; flex-direction: column; align-items: center; gap: 4px; padding-top: 2px; }
.grip { width: 12px; height: 3px; background: #7b838f; }
.cmdmain {
  flex: 1;
  min-width: 0;
  color: #222;
  font: 8px/10px "Liberation Mono", "DejaVu Sans Mono", monospace;
}
.history {
  height: 25px;
  display: flex;
  flex-direction: column;
  justify-content: flex-end;
  overflow: hidden;
  padding: 0 2px;
  background: #c6c6c6;
  border-bottom: 1px solid #555;
  white-space: nowrap;
}
.entry { display: flex; align-items: center; height: 13px; padding-left: 4px; background: #fff; }
.entry .dd { background: #444; margin: 0 4px 0 9px; }
.entry input { flex: 1; font-weight: 700; }
.dots { width: 2px; height: 7px; background: repeating-linear-gradient(#bbb 0 1px, #fff 1px 3px); }

/* Status bar */
.status { flex: none; display: flex; align-items: center; height: 22px; padding-right: 2px; }
.modeltab {
  height: 16px;
  padding: 0 11px;
  margin-left: -4px;
  background: #3b4453;
  color: #f2f4f6;
  font-weight: 700;
  clip-path: polygon(6px 0, 100% 0, calc(100% - 6px) 100%, 0 100%);
}
.lay { padding: 0 5px; }
.tray { margin-left: auto; display: flex; height: 16px; }
.tray button {
  width: 16px;
  display: flex;
  align-items: center;
  justify-content: center;
  background: #303845;
}
.tray .a { width: 12px; }
.tray .act { background: #5b8cc3; outline: 1px solid #303845; outline-offset: -1px; }
.tray .model { width: 31px; margin-right: 2px; }
.tray .scale { width: 24px; gap: 3px; }
.tray .wide { width: 21px; }
```
